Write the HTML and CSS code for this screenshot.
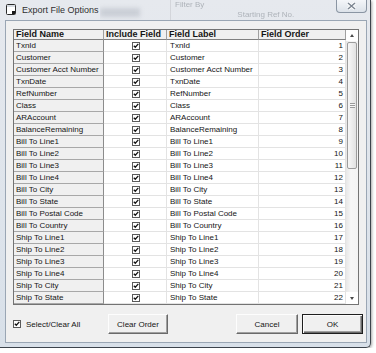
FILE: index.html
```html
<!DOCTYPE html>
<html lang="en">

<head>
    <meta charset="UTF-8" />
    <title>Export File Options</title>
    <link rel="stylesheet" href="styles.css">
</head>

<body>
    <svg class="defs" width="0" height="0">
        <symbol id="chk" viewBox="0 0 8 8">
            <rect x=".5" y=".5" width="7" height="7" fill="#fff" stroke="#5a5a5a" />
            <path d="M1.8 3.7l1.5 1.6 3-3.4" fill="none" stroke="#141414" stroke-width="1.3" />
        </symbol>
    </svg>

    <div class="window">
        <div class="titlebar">
            <svg class="app-icon" viewBox="0 0 10 11">
                <rect x=".5" y=".5" width="9" height="10" rx="1" fill="#fff" stroke="#2a2a2a" />
                <rect x="1" y="1" width="8" height="2" fill="#d6dbe2" />
                <rect x="6" y="7" width="3" height="3" fill="#1a1a1a" />
            </svg>
            <span class="title">Export File Options</span>
            <div class="ghost">
                <span class="ghost-bar"></span>
                <span class="ghost-line"></span>
                <span class="ghost-text g1">Filter By</span>
                <span class="ghost-text g2">Starting Ref No.</span>
            </div>
            <div class="close-btn">
                <svg width="11" height="8" viewBox="0 0 11 8">
                    <path d="M2 1l7 6M9 1L2 7" stroke="#fff" stroke-width="3" />
                    <path d="M2 1l7 6M9 1L2 7" stroke="#7b8591" stroke-width="1.5" />
                </svg>
            </div>
        </div>

        <div class="client">
            <div class="grid">
                <div class="cols">
                    <div class="row head">
                        <div class="c">Field Name</div>
                        <div class="c">Include Field</div>
                        <div class="c">Field Label</div>
                        <div class="c">Field Order</div>
                    </div>
                    <div class="row"><div class="c name">TxnId</div><div class="c inc"><svg class="chk"><use href="#chk" /></svg></div><div class="c">TxnId</div><div class="c num">1</div></div>
                    <div class="row"><div class="c name">Customer</div><div class="c inc"><svg class="chk"><use href="#chk" /></svg></div><div class="c">Customer</div><div class="c num">2</div></div>
                    <div class="row"><div class="c name">Customer Acct Number</div><div class="c inc"><svg class="chk"><use href="#chk" /></svg></div><div class="c">Customer Acct Number</div><div class="c num">3</div></div>
                    <div class="row"><div class="c name">TxnDate</div><div class="c inc"><svg class="chk"><use href="#chk" /></svg></div><div class="c">TxnDate</div><div class="c num">4</div></div>
                    <div class="row"><div class="c name">RefNumber</div><div class="c inc"><svg class="chk"><use href="#chk" /></svg></div><div class="c">RefNumber</div><div class="c num">5</div></div>
                    <div class="row"><div class="c name">Class</div><div class="c inc"><svg class="chk"><use href="#chk" /></svg></div><div class="c">Class</div><div class="c num">6</div></div>
                    <div class="row"><div class="c name">ARAccount</div><div class="c inc"><svg class="chk"><use href="#chk" /></svg></div><div class="c">ARAccount</div><div class="c num">7</div></div>
                    <div class="row"><div class="c name">BalanceRemaining</div><div class="c inc"><svg class="chk"><use href="#chk" /></svg></div><div class="c">BalanceRemaining</div><div class="c num">8</div></div>
                    <div class="row"><div class="c name">Bill To Line1</div><div class="c inc"><svg class="chk"><use href="#chk" /></svg></div><div class="c">Bill To Line1</div><div class="c num">9</div></div>
                    <div class="row"><div class="c name">Bill To Line2</div><div class="c inc"><svg class="chk"><use href="#chk" /></svg></div><div class="c">Bill To Line2</div><div class="c num">10</div></div>
                    <div class="row"><div class="c name">Bill To Line3</div><div class="c inc"><svg class="chk"><use href="#chk" /></svg></div><div class="c">Bill To Line3</div><div class="c num">11</div></div>
                    <div class="row"><div class="c name">Bill To Line4</div><div class="c inc"><svg class="chk"><use href="#chk" /></svg></div><div class="c">Bill To Line4</div><div class="c num">12</div></div>
                    <div class="row"><div class="c name">Bill To City</div><div class="c inc"><svg class="chk"><use href="#chk" /></svg></div><div class="c">Bill To City</div><div class="c num">13</div></div>
                    <div class="row"><div class="c name">Bill To State</div><div class="c inc"><svg class="chk"><use href="#chk" /></svg></div><div class="c">Bill To State</div><div class="c num">14</div></div>
                    <div class="row"><div class="c name">Bill To Postal Code</div><div class="c inc"><svg class="chk"><use href="#chk" /></svg></div><div class="c">Bill To Postal Code</div><div class="c num">15</div></div>
                    <div class="row"><div class="c name">Bill To Country</div><div class="c inc"><svg class="chk"><use href="#chk" /></svg></div><div class="c">Bill To Country</div><div class="c num">16</div></div>
                    <div class="row"><div class="c name">Ship To Line1</div><div class="c inc"><svg class="chk"><use href="#chk" /></svg></div><div class="c">Ship To Line1</div><div class="c num">17</div></div>
                    <div class="row"><div class="c name">Ship To Line2</div><div class="c inc"><svg class="chk"><use href="#chk" /></svg></div><div class="c">Ship To Line2</div><div class="c num">18</div></div>
                    <div class="row"><div class="c name">Ship To Line3</div><div class="c inc"><svg class="chk"><use href="#chk" /></svg></div><div class="c">Ship To Line3</div><div class="c num">19</div></div>
                    <div class="row"><div class="c name">Ship To Line4</div><div class="c inc"><svg class="chk"><use href="#chk" /></svg></div><div class="c">Ship To Line4</div><div class="c num">20</div></div>
                    <div class="row"><div class="c name">Ship To City</div><div class="c inc"><svg class="chk"><use href="#chk" /></svg></div><div class="c">Ship To City</div><div class="c num">21</div></div>
                    <div class="row"><div class="c name">Ship To State</div><div class="c inc"><svg class="chk"><use href="#chk" /></svg></div><div class="c">Ship To State</div><div class="c num">22</div></div>
                </div>
                <div class="scrollbar">
                    <div class="sb-btn"><span class="arrow-up"></span></div>
                    <div class="sb-track">
                        <div class="thumb"><span class="grip"></span></div>
                    </div>
                    <div class="sb-btn down"><span class="arrow-down"></span></div>
                </div>
            </div>

            <div class="footer">
                <label class="select-all"><svg class="chk"><use href="#chk" /></svg>Select/Clear All</label>
                <button class="btn clear">Clear Order</button>
                <span class="spacer"></span>
                <button class="btn cancel">Cancel</button>
                <button class="btn ok">OK</button>
            </div>
        </div>
    </div>
</body>

</html>
```

FILE: styles.css
```css
* {
    box-sizing: border-box;
}

body {
    margin: 0;
    background-color: #fff;
    font-family: "Liberation Sans", Arial, sans-serif;
    color: #151515;
}

.defs {
    display: block;
    width: 0;
    height: 0;
    overflow: hidden;
}

.window {
    width: 371px;
    height: 348px;
    display: flex;
    flex-direction: column;
    background: linear-gradient(#e6e9ee, #d8e0e9);
    border-right: 1px solid #3d444c;
    border-bottom: 1px solid #3d444c;
    border-bottom-right-radius: 5px;
    box-shadow: 1px 1px 3px rgba(0, 0, 0, 0.35);
}

/* title bar */
.titlebar {
    height: 20px;
    display: flex;
    align-items: flex-start;
    flex: none;
}

.app-icon {
    flex: none;
    width: 10px;
    height: 11px;
    margin: 4px 0 0 6px;
}

.title {
    flex: none;
    width: 78px;
    margin: 5px 0 0 6px;
    font-size: 9px;
    line-height: 10px;
    color: #303030;
    white-space: nowrap;
}

.ghost {
    flex: 1;
    min-width: 0;
    height: 20px;
    overflow: hidden;
    display: flex;
    align-items: flex-start;
}

.ghost-bar {
    flex: none;
    width: 40px;
    height: 9px;
    margin-top: 8px;
    background-color: rgba(110, 120, 135, 0.22);
    filter: blur(2px);
}

.ghost-line {
    flex: none;
    width: 1px;
    height: 20px;
    margin-left: 30px;
    background-color: rgba(0, 0, 0, 0.08);
}

.ghost-text {
    flex: none;
    font-size: 8px;
    line-height: 8px;
    color: rgba(40, 50, 60, 0.3);
    filter: blur(0.6px);
    white-space: nowrap;
}

.g1 {
    margin: 1px 0 0 4px;
}

.g2 {
    margin: 11px 0 0 33px;
}

.close-btn {
    flex: none;
    width: 31px;
    height: 13px;
    margin-right: 3px;
    display: flex;
    align-items: center;
    justify-content: center;
    border: 1px solid #8a95a3;
    border-top: none;
    border-radius: 0 0 4px 4px;
    background: linear-gradient(#f4f6f9, #dce2e9);
}

/* client area */
.client {
    height: 323px;
    margin: 0 3px 0 5px;
    padding: 8px 7px;
    display: flex;
    flex-direction: column;
    background-color: #f0f0f0;
    border: 1px solid #9aa6b4;
}

.grid {
    flex: none;
    height: 276px;
    display: flex;
    background-color: #fff;
    border: 1px solid #737373;
}

.cols {
    width: 332px;
}

.row {
    display: grid;
    grid-template-columns: 90px 63px 92px 87px;
    height: 12px;
}

.c {
    padding: 0 2px 0 3px;
    font-size: 8px;
    line-height: 11px;
    white-space: nowrap;
    overflow: hidden;
    border-right: 1px solid #e3e3e3;
    border-bottom: 1px solid #e3e3e3;
}

.c.name {
    padding-left: 2px;
    background-color: #f0f0f0;
    border-right-color: #8c8c8c;
    border-bottom-color: #a8a8a8;
}

.c.inc {
    display: flex;
    align-items: center;
    justify-content: center;
}

.c.num {
    text-align: right;
    padding-right: 2px;
}

.head {
    height: 10px;
}

.head .c {
    padding-left: 2px;
    font-size: 9px;
    font-weight: bold;
    line-height: 9px;
    background-color: #f0f0f0;
    border-right-color: #a0a0a0;
    border-bottom-color: #808080;
}

.chk {
    width: 8px;
    height: 8px;
    flex: none;
}

/* scrollbar */
.scrollbar {
    width: 12px;
    display: flex;
    flex-direction: column;
    background: linear-gradient(to right, #e7e7e7, #f6f6f6 40%, #f3f3f3);
}

.sb-btn {
    height: 11px;
    display: flex;
    align-items: center;
    justify-content: center;
    background-color: #fff;
}

.sb-btn.down {
    height: 12px;
}

.arrow-up {
    width: 0;
    height: 0;
    border-left: 2.5px solid transparent;
    border-right: 2.5px solid transparent;
    border-bottom: 3px solid #4a4a4a;
}

.arrow-down {
    width: 0;
    height: 0;
    border-left: 2.5px solid transparent;
    border-right: 2.5px solid transparent;
    border-top: 3px solid #4a4a4a;
}

.sb-track {
    flex: 1;
    padding: 1px 1px 0 1px;
}

.thumb {
    height: 127px;
    display: flex;
    align-items: center;
    justify-content: center;
    border: 1px solid #9c9c9c;
    border-radius: 2px;
    background: linear-gradient(to right, #f7f7f7, #e2e2e2);
}

.grip {
    width: 5px;
    height: 5px;
    border-top: 1px solid #9a9a9a;
    border-bottom: 1px solid #9a9a9a;
    background: linear-gradient(#f7f7f7 1px, #9a9a9a 1px, #9a9a9a 2px, #f7f7f7 2px);
    background-size: 5px 3px;
    background-position: 0 0;
}

/* footer */
.footer {
    flex: none;
    height: 20px;
    margin: 9px -4px 0 0;
    display: flex;
    align-items: center;
}

.select-all {
    width: 95px;
    display: flex;
    align-items: center;
    gap: 5px;
    font-size: 8px;
}

.btn {
    height: 20px;
    padding: 0;
    font-family: "Liberation Sans", Arial, sans-serif;
    font-size: 8px;
    color: #151515;
    background-color: #f0f0f0;
    border: 1px solid;
    border-color: #fdfdfd #6a6a6a #6a6a6a #fdfdfd;
    box-shadow: inset -1px -1px #a0a0a0;
}

.btn.clear {
    width: 60px;
}

.spacer {
    flex: 1;
}

.btn.cancel {
    width: 62px;
    margin-right: 4px;
}

.btn.ok {
    width: 61px;
    border-color: #1e1e1e;
    box-shadow: inset 1px 1px #fdfdfd, inset -1px -1px #6a6a6a, inset -2px -2px #a0a0a0;
}
```
